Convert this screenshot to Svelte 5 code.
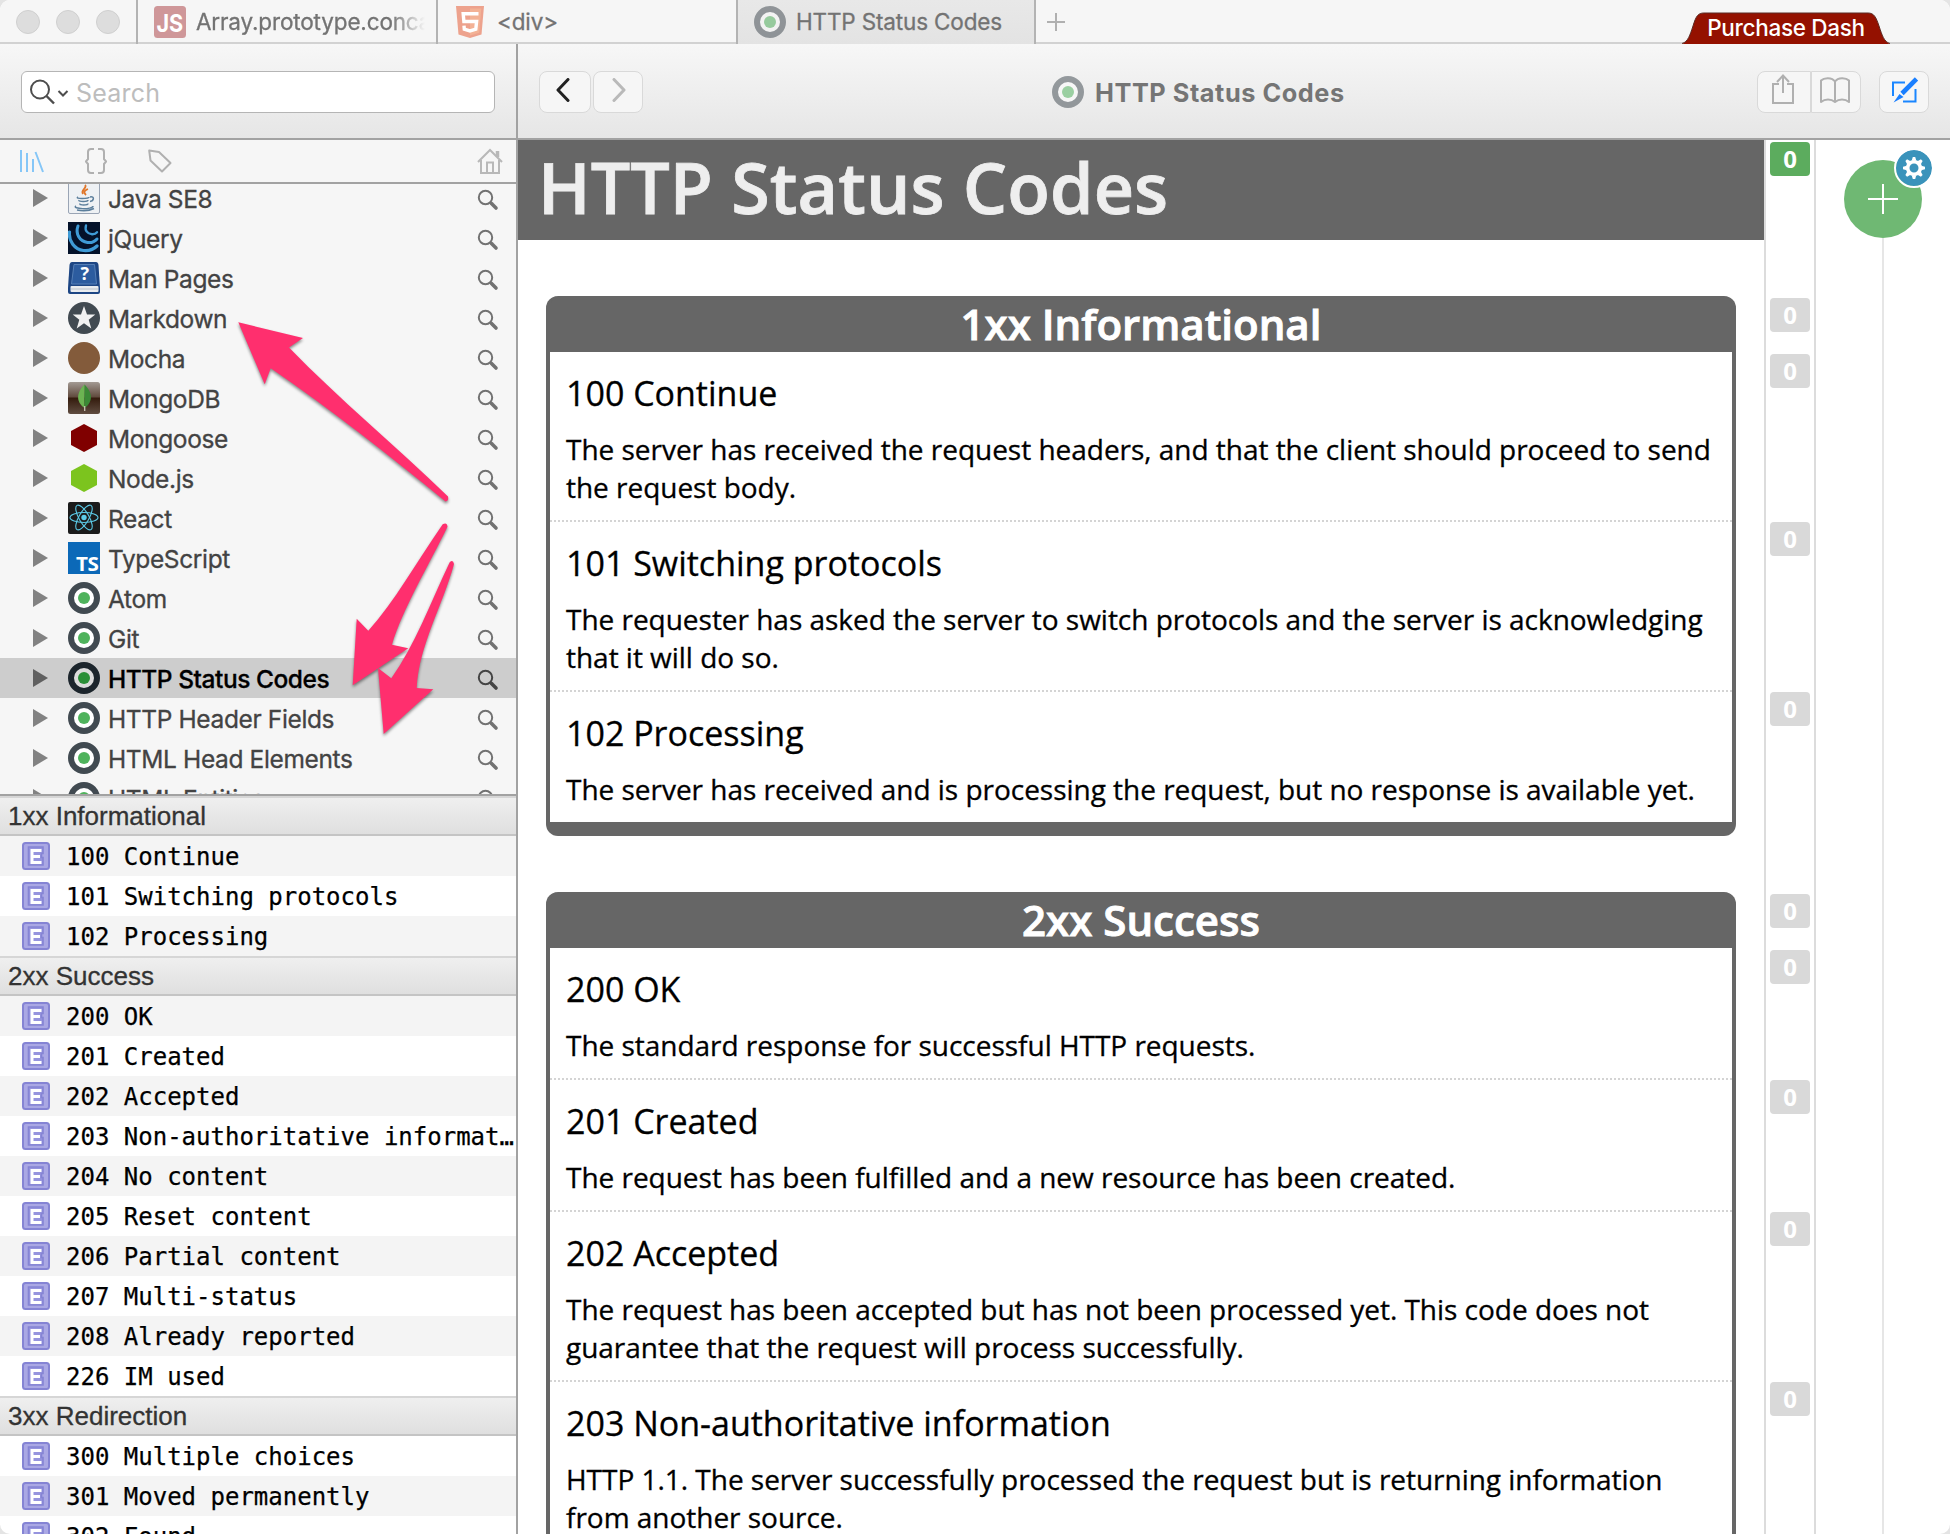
<script>
  const docsets = [
    { name: 'Java SE8', icon: 'java' },
    { name: 'jQuery', icon: 'jquery' },
    { name: 'Man Pages', icon: 'man' },
    { name: 'Markdown', icon: 'markdown' },
    { name: 'Mocha', icon: 'mocha' },
    { name: 'MongoDB', icon: 'mongo' },
    { name: 'Mongoose', icon: 'mongoose' },
    { name: 'Node.js', icon: 'node' },
    { name: 'React', icon: 'react' },
    { name: 'TypeScript', icon: 'ts' },
    { name: 'Atom', icon: 'ring' },
    { name: 'Git', icon: 'ring' },
    { name: 'HTTP Status Codes', icon: 'ring', selected: true },
    { name: 'HTTP Header Fields', icon: 'ring' },
    { name: 'HTML Head Elements', icon: 'ring' },
    { name: 'HTML Entities', icon: 'ring' }
  ];

  const index = [
    { head: '1xx Informational' },
    { text: '100 Continue' },
    { text: '101 Switching protocols' },
    { text: '102 Processing' },
    { head: '2xx Success' },
    { text: '200 OK' },
    { text: '201 Created' },
    { text: '202 Accepted' },
    { text: '203 Non-authoritative information' },
    { text: '204 No content' },
    { text: '205 Reset content' },
    { text: '206 Partial content' },
    { text: '207 Multi-status' },
    { text: '208 Already reported' },
    { text: '226 IM used' },
    { head: '3xx Redirection' },
    { text: '300 Multiple choices' },
    { text: '301 Moved permanently' },
    { text: '302 Found' }
  ];

  const sections = [
    {
      title: '1xx Informational',
      items: [
        ['100 Continue', ['The server has received the request headers, and that the client should proceed to send', 'the request body.']],
        ['101 Switching protocols', ['The requester has asked the server to switch protocols and the server is acknowledging', 'that it will do so.']],
        ['102 Processing', ['The server has received and is processing the request, but no response is available yet.']]
      ]
    },
    {
      title: '2xx Success',
      items: [
        ['200 OK', ['The standard response for successful HTTP requests.']],
        ['201 Created', ['The request has been fulfilled and a new resource has been created.']],
        ['202 Accepted', ['The request has been accepted but has not been processed yet. This code does not', 'guarantee that the request will process successfully.']],
        ['203 Non-authoritative information', ['HTTP 1.1. The server successfully processed the request but is returning information', 'from another source.']]
      ]
    }
  ];

  // Distance from each annotation counter to the next one.
  const counters = [156, 56, 168, 170, 202, 56, 130, 132, 170, 152];
</script>

{#snippet ring(cls)}
  <svg class={cls} width="32" height="32" viewBox="0 0 32 32">
    <circle cx="16" cy="16" r="13" fill="#fff" stroke="#414a51" stroke-width="6" />
    <circle cx="16" cy="16" r="6" fill="#4fb35c" />
  </svg>
{/snippet}

{#snippet icon(kind)}
  <svg width="32" height="32" viewBox="0 0 32 32">
    {#if kind === 'java'}
      <rect x="0.5" y="0.5" width="31" height="31" rx="1.5" fill="#eef1f4" stroke="#9aa5b5" />
      <path d="M17 3c3 3-5 5-2 9 M20 7c-5 2-4 4-2 6" fill="none" stroke="#e0762a" stroke-width="1.8" />
      <path d="M10 15c-4 2 11 2 11 0M11 18c-1 2 9 2 9 0M12 21.5c-1 2 8 2 8 0M22 15c5-1 4 4 0 4.500M8 24c-5 3 17 4 17 0M9 28c8 1.500 14 0 17-1.500" fill="none" stroke="#5c7f9c" stroke-width="1.500" />
    {:else if kind === 'jquery'}
      <rect width="32" height="32" fill="#04122a" />
      <g fill="none" stroke="#3f9bd6" stroke-linecap="round">
        <path d="M1.500 10c-1 9 5 17.500 14 18.500c6 .6 10-1 13.500-4.500" stroke-width="3.200" />
        <path d="M10 4c-3 8 2 15.500 9.500 16.500c4 .5 7-.5 9.500-3.500" stroke-width="3" />
        <path d="M18 3.500c-1.500 5 1.500 8.500 6 8.700c2.500 .1 4-.7 5-2" stroke-width="2.400" />
      </g>
    {:else if kind === 'man'}
      <path d="M4 0h24q2 0 2.500 3L32 26v4q0 2-2 2H2q-2 0-2-2v-4L1.500 3Q2 0 4 0z" fill="#1d4684" />
      <path d="M6 2.500h20.500L28.500 22H3.500z" fill="#2c5c9f" stroke="#557fb6" />
      <rect x="2.500" y="24" width="28" height="6" rx="1" fill="#e9ecef" />
      <path d="M3 27h27" stroke="#b8c0ca" />
      <text x="16.500" y="18" text-anchor="middle" class="qm">?</text>
    {:else if kind === 'markdown'}
      <circle cx="16" cy="16" r="16" fill="#414a51" />
      <path d="M16 4l3 8.600h8.300l-6.600 5.200l2.600 8.700L16 21.200l-7.300 5.300l2.600-8.700l-6.600-5.200H13z" fill="#f1f1f1" />
    {:else if kind === 'mocha'}
      <circle cx="16" cy="16" r="16" fill="#835b3b" />
    {:else if kind === 'mongo'}
      <defs>
        <linearGradient id="mg" x1="0" y1="0" x2="0" y2="1">
          <stop offset="0" stop-color="#a39a93" /><stop offset=".47" stop-color="#604a3d" />
          <stop offset=".5" stop-color="#341b0d" /><stop offset="1" stop-color="#5f4c40" />
        </linearGradient>
      </defs>
      <rect width="32" height="32" rx="2.500" fill="url(#mg)" />
      <path d="M16.500 2.500C7 12 9 21 16.500 26z" fill="#6cb452" />
      <path d="M16.500 2.500C26 12 24 21 16.500 26z" fill="#3b8936" />
      <path d="M16.700 24v5" stroke="#c9c4b5" stroke-width="1.300" />
    {:else if kind === 'mongoose'}
      <path d="M16 2l13 7v14l-13 7l-13-7V9z" fill="#800000" />
    {:else if kind === 'node'}
      <path d="M16 2l13 7v14l-13 7l-13-7V9z" fill="#7cc41e" />
    {:else if kind === 'react'}
      <rect width="32" height="32" rx="2" fill="#1b1b1b" />
      <g fill="none" stroke="#5ccbe8" stroke-width="1.100">
        <ellipse cx="16" cy="15.500" rx="14" ry="5" />
        <ellipse cx="16" cy="15.500" rx="14" ry="5" transform="rotate(60 16 15.500)" />
        <ellipse cx="16" cy="15.500" rx="14" ry="5" transform="rotate(120 16 15.500)" />
      </g>
      <circle cx="16" cy="15.500" r="2.700" fill="#5ccbe8" />
    {:else if kind === 'ts'}
      <rect width="32" height="32" fill="#0c69b8" />
      <text x="8" y="29" class="ts" textLength="22.500" lengthAdjust="spacingAndGlyphs">TS</text>
    {/if}
  </svg>
{/snippet}

<div class="window">
  <div class="tabs">
    <div class="lights"><i></i><i></i><i></i></div>
    <div class="tab">
      <svg width="32" height="32" viewBox="0 0 32 32">
        <rect width="32" height="32" rx="3.500" fill="#cf9799" />
        <text x="2.500" y="25.500" class="js" textLength="26.500" lengthAdjust="spacingAndGlyphs">JS</text>
      </svg>
      <span class="fade">Array.prototype.concat</span>
    </div>
    <div class="tab html">
      <svg width="28" height="32" viewBox="0 0 28 32">
        <path d="M0 0h28l-2.500 28.600L14 32L2.500 28.600z" fill="#eda28d" />
        <path d="M14 2.500h11.300l-2.100 24.300L14 29.500z" fill="#f3b295" />
        <path d="M22.500 7.800H7.200l.7 7.700h12.700l-.8 7.700l-5.800 1.700l-5.700-1.700l-.3-3.600" fill="none" stroke="#fff" stroke-width="3.400" />
      </svg>
      <span>&lt;div&gt;</span>
    </div>
    <div class="tab active">
      {@render ring('dim')}
      <span>HTTP Status Codes</span>
    </div>
    <svg class="plus" width="18" height="18" viewBox="0 0 18 18"><path d="M9 0v18M0 9h18" stroke="#b0b0b0" stroke-width="2" /></svg>
    <div class="purchase">
      <svg width="208" height="32" viewBox="0 0 208 32"><path d="M0 32C6 30 8 23 11 14C14 4 16 1 22 1H186C192 1 194 5 197 14C200 23 202 30 208 32z" fill="#941100" /><path d="M0 31.500C6 30 8 23 11 14C14 4 16 1 22 1H186C192 1 194 5 197 14C200 23 202 30 208 31.500" fill="none" stroke="#5a2a24" /></svg>
      <span>Purchase Dash</span>
    </div>
  </div>

  <div class="toolbar">
    <div class="searchbox">
      <div class="search">
        <svg width="42" height="30" viewBox="0 0 42 30">
          <circle cx="13" cy="12.500" r="9" fill="none" stroke="#4d4d4d" stroke-width="2" />
          <path d="M19.500 19l7.500 7.500" stroke="#4d4d4d" stroke-width="2.400" />
          <path d="M31.500 14l4.500 4.500l4.500-4.500" fill="none" stroke="#4d4d4d" stroke-width="2" />
        </svg>
        <span>Search</span>
      </div>
    </div>
    <div class="nav">
      <div class="btn back"><svg width="14" height="24" viewBox="0 0 14 24"><path d="M12 1.500L2 12l10 10.500" fill="none" stroke="#222" stroke-width="3" stroke-linecap="round" stroke-linejoin="round" /></svg></div>
      <div class="btn fwd"><svg width="14" height="24" viewBox="0 0 14 24"><path d="M2 1.500L12 12L2 22.500" fill="none" stroke="#b9b9b9" stroke-width="3" stroke-linecap="round" stroke-linejoin="round" /></svg></div>
    </div>
    <div class="title">
      {@render ring('dim')}
      <span>HTTP Status Codes</span>
    </div>
    <div class="actions">
      <div class="btn share">
        <svg width="22" height="30" viewBox="0 0 22 30"><path d="M7 10H1v19h20V10h-6M11 19V2M5 8l6-6.500L17 8" fill="none" stroke="#b0b0b0" stroke-width="2" /></svg>
      </div>
      <div class="btn book">
        <svg width="30" height="26" viewBox="0 0 30 26"><path d="M15 4.500C12 0 4 .5 1 3.500V25c4-3.500 10-3.500 14 0c4-3.500 10-3.500 14 0V3.500C26 .5 18 0 15 4.500V24" fill="none" stroke="#b0b0b0" stroke-width="2" stroke-linejoin="round" /></svg>
      </div>
      <div class="btn edit">
        <svg width="26" height="26" viewBox="0 0 26 26"><path d="M13 5.500H1V19M23.500 12v12.500H11" fill="none" stroke="#1a86ff" stroke-width="2" /><path d="M24.500 2L10 16.500" stroke="#1a7fff" stroke-width="4.600" /><path d="M7.500 17l4 3L1.500 25.500z" fill="#1a7fff" /></svg>
      </div>
    </div>
  </div>

  <div class="body">
    <div class="sidebar">
      <div class="modes">
        <svg width="24" height="24" viewBox="0 0 24 24"><path d="M1 1v22M7 4v19M13 10v13M15.500 3L23 23" stroke="#85c6f7" stroke-width="2" /></svg>
        <svg class="braces" width="22" height="26" viewBox="0 0 22 26"><path d="M9 1H6Q3 1 3 4v7L.8 13.500L3 16v6q0 3 3 3h3M13 1h3q3 0 3 3v7l2.200 2.500L19 16v6q0 3-3 3h-3" fill="none" stroke="#b0b0b0" stroke-width="2" /></svg>
        <svg class="tag" width="24" height="24" viewBox="0 0 24 24"><path d="M1.200 1.500L11 3L22.500 14L14 22.500L2.500 11.500z" fill="none" stroke="#b0b0b0" stroke-width="2" stroke-linejoin="round" /></svg>
        <svg class="home" width="26" height="26" viewBox="0 0 26 26"><path d="M1 14L13 2l12 12M4 12v13h18V12M10 25V14.500h6V25" fill="none" stroke="#b8b8b8" stroke-width="2" /><path d="M20.500 3v6" stroke="#b8b8b8" stroke-width="3.500" /></svg>
      </div>
      <div class="docsets">
        {#each docsets as d}
          <div class="docset" class:selected={d.selected}>
            <svg class="tri" width="15" height="18" viewBox="0 0 15 18"><path d="M0 0l15 9L0 18z" /></svg>
            <div class="ico">{#if d.icon === 'ring'}{@render ring(d.selected ? 'dark' : '')}{:else}{@render icon(d.icon)}{/if}</div>
            <span>{d.name}</span>
            <svg class="mag" width="22" height="22" viewBox="0 0 22 22"><circle cx="8.500" cy="8.500" r="6.700" /><path d="M13 13l2 2" /><path class="handle" d="M14.500 14.500l4.500 4.500" /></svg>
          </div>
        {/each}
      </div>
      <div class="index">
        {#each index as row, i}
          {#if row.head}
            <div class="head">{row.head}</div>
          {:else}
            <div class="entry" class:odd={i % 2 === 1}>
              <svg width="28" height="28" viewBox="0 0 28 28">
                <rect x="1" y="1" width="26" height="26" rx="2.500" fill="#aaa8e4" stroke="#8584d4" stroke-width="2" />
                <path d="M6.500 5H21v6.500h-1.500v4H21V23H6.500z" fill="#9694de" stroke="#8584d4" stroke-width="1.600" />
                <path d="M19.500 8.500H10v12h9.500M10 14.500h8" fill="none" stroke="#fff" stroke-width="3" />
              </svg>
              <span>{row.text}</span>
            </div>
          {/if}
        {/each}
      </div>
    </div>

    <div class="page">
      <h1>HTTP Status Codes</h1>
      {#each sections as s}
        <section>
          <h2>{s.title}</h2>
          {#each s.items as [title, lines]}
            <article>
              <h3>{title}</h3>
              {#each lines as line}<p>{line}</p>{/each}
            </article>
          {/each}
        </section>
      {/each}
    </div>

    <div class="counters">
      {#each counters as h, i}
        <div class="slot" style="height: {h}px"><b class:green={i === 0}>0</b></div>
      {/each}
    </div>

    <div class="notes">
      <div class="add">
        <svg width="30" height="30" viewBox="0 0 30 30"><path d="M15 0v30M0 15h30" stroke="#fff" stroke-width="2" /></svg>
        <div class="gear">
          <svg width="22" height="22" viewBox="-11 -11 22 22">
            <circle r="6.300" fill="none" stroke="#fff" stroke-width="3.600" />
            {#each [0, 45, 90, 135, 180, 225, 270, 315] as a}
              <path d="M-2.300-7.200L-1.200-11H1.200L2.300-7.200z" fill="#fff" transform="rotate({a})" />
            {/each}
          </svg>
        </div>
      </div>
      <div class="line"></div>
    </div>
  </div>

  <svg class="arrows" width="518" height="800" viewBox="0 0 518 800">
    <g fill="#ff2f6e">
      <path d="M238.300 322.300L303 338L289 347.500C340 400 396 446 448 496.500Q449 501 445.500 501.500C390 456 330 409 270.700 368.300L264.700 384.300z" />
      <path d="M352.700 685.300L356.700 618.700L368.300 630.700C395 601 416 563 442.700 524.300Q447 522 447.500 526.700C430 563 402 610 392 644.700L408.300 648.300z" />
      <path d="M383.700 734L378 668L391.300 678.300C415 645 430 604 449.700 562.300Q453 559 454 564C443 605 419 645 416.700 688L433.300 689.300z" />
    </g>
  </svg>
</div>

<style>
  :global(body) { margin: 0; background: #e4e4e4; }
  .window {
    position: relative;
    width: 1950px;
    height: 1534px;
    overflow: hidden;
    display: flex;
    flex-direction: column;
    background: #fff;
    border-radius: 10px;
    font-family: Inter, Roboto, sans-serif;
  }
  svg { display: block; flex: none; }
  .window * { box-sizing: border-box; }

  .tabs { display: flex; height: 44px; flex: none; background: #f6f6f6; border-bottom: 2px solid #d2d2d2; }
  .lights { width: 136px; display: flex; gap: 16px; padding: 10px 0 0 16px; }
  .lights i { width: 24px; height: 24px; border-radius: 50%; background: #ddd; border: 1px solid #cfcfcf; }
  .tab {
    width: 300px; height: 44px; display: flex; gap: 10px; padding: 6px 0 0 16px;
    border-left: 2px solid #b3b3b3; color: #737373; font-size: 22.500px; line-height: 32px; white-space: nowrap;
    letter-spacing: -.15px; -webkit-text-stroke: .3px #737373;
  }
  .tab.html { padding-left: 18px; gap: 13px; }
  .tab.active { width: 300px; border-right: 2px solid #b3b3b3; background: linear-gradient(#e8e8e8, #e3e3e3); padding-left: 16px; gap: 10px; }
  .fade { width: 229px; overflow: hidden; -webkit-mask-image: linear-gradient(90deg, #000 195px, transparent 229px); mask-image: linear-gradient(90deg, #000 195px, transparent 229px); }
  .dim { opacity: .52; }
  .plus { margin: 13px 0 0 11px; }
  .purchase { position: relative; margin: 12px 60px 0 auto; height: 32px; width: 208px; }
  .purchase span { position: absolute; inset: 0; text-align: center; color: #fff; font-size: 22.500px; line-height: 32px; font-weight: 500; letter-spacing: -.3px; }

  .toolbar { display: flex; height: 96px; flex: none; background: linear-gradient(#f7f7f7, #e6e6e6); border-bottom: 2px solid #a2a2a2; }
  .searchbox { width: 518px; border-right: 2px solid #a2a2a2; padding: 27px 21px 0; }
  .search { height: 42px; border: 1px solid #b5b5b5; border-radius: 6px; background: #fff; display: flex; padding: 5px 0 0 5px; color: #bdbdbd; font-size: 25px; line-height: 32px; letter-spacing: .2px; gap: 7px; }
  .btn { height: 42px; border: 1px solid #d9d9d9; border-radius: 8px; background: #f6f6f6; display: flex; justify-content: center; padding-top: 6px; }
  .nav { display: flex; gap: 2px; padding: 27px 0 0 21px; width: 534px; }
  .back { width: 52px; padding-right: 5px; }
  .fwd { width: 50px; padding-left: 2px; }
  .title { display: flex; gap: 11px; padding-top: 32px; color: #757575; font-size: 25.300px; font-weight: 700; line-height: 34px; letter-spacing: .55px; white-space: nowrap; }
  .actions { margin-left: auto; display: flex; padding: 27px 21px 0 0; }
  .share { width: 54px; border-radius: 8px 0 0 8px; padding-top: 2px; padding-right: 2px; }
  .book { width: 50px; border-radius: 0 8px 8px 0; border-left-width: 1px; padding-top: 5px; padding-right: 3px; }
  .edit { width: 50px; margin-left: 18px; padding-top: 5px; padding-left: 1px; }

  .body { flex: 1; min-height: 0; display: flex; }
  .sidebar { width: 518px; flex: none; border-right: 2px solid #a2a2a2; display: flex; flex-direction: column; overflow: hidden; }
  .modes { height: 44px; flex: none; background: #f6f6f6; border-bottom: 2px solid #a2a2a2; display: flex; padding: 9px 13px 0 20px; }
  .braces { margin: -1px 0 0 41px; }
  .tag { margin-left: 41px; }
  .home { margin: -1px 0 0 auto; }
  .docsets { height: 612px; flex: none; overflow: hidden; background: #f6f6f6; border-bottom: 2px solid #a2a2a2; display: flex; flex-direction: column; justify-content: flex-start; }
  .docset { height: 40px; flex: none; display: flex; padding: 4px 17px 0 33px; color: #434343; font-size: 24.500px; line-height: 34px; letter-spacing: -.37px; white-space: nowrap; -webkit-text-stroke: .3px #434343; }
  .docset:first-child { margin-top: -6px; }
  .docset.selected { background: #cdcdcd; color: #000; font-weight: 500; letter-spacing: -.46px; -webkit-text-stroke-color: #000; }
  .tri { margin: 7px 20px 0 0; fill: #828282; }
  .selected .tri { fill: #606060; }
  .ico { margin-right: 8px; }
  .dark { filter: brightness(.78) contrast(1.3); }
  .mag { margin: 7px 0 0 auto; fill: none; stroke: #727272; stroke-width: 2; }
  .mag .handle { stroke-width: 3.600; stroke-linecap: round; }
  .selected .mag { stroke: #444; }
  .qm { font: 700 18px "Open Sans", sans-serif; fill: #fff; }
  .ts { font: 700 20px "Open Sans", sans-serif; fill: #fff; }
  .js { font: 700 24px Inter, sans-serif; fill: #fff; }

  .head { height: 40px; padding-left: 8px; border-top: 2px solid #d6d6d6; border-bottom: 2px solid #c4c4c4; background: linear-gradient(#efefef, #dfdfdf); color: #333; font: 26px/37px "Liberation Sans", Arial, sans-serif; -webkit-text-stroke: .3px #333; white-space: nowrap; }
  .entry { height: 40px; display: flex; gap: 16px; padding: 6px 0 0 22px; color: #000; font: 24px/31px "DejaVu Sans Mono", monospace; white-space: nowrap; -webkit-text-stroke: .25px #000; }
  .entry.odd { background: #f4f4f4; }
  .entry span { flex: 1; min-width: 0; overflow: hidden; text-overflow: ellipsis; }

  .page { width: 1246px; flex: none; height: 1394px; overflow: hidden; font-family: "Open Sans", sans-serif; color: #000; }
  h1, h2, h3, p { margin: 0; white-space: nowrap; }
  h1 { height: 100px; padding-left: 20px; background: #666; color: #eee; font-size: 70px; font-weight: 600; line-height: 94px; letter-spacing: .06px; -webkit-text-stroke: .8px #eee; }
  section { margin: 56px 28px 0; border: 4px solid #666; border-top: 0; border-bottom-width: 14px; border-radius: 12px; background: #666; }
  h2 { height: 56px; color: #fff; text-align: center; font-size: 42px; font-weight: 600; line-height: 56px; -webkit-text-stroke: .9px #fff; }
  article { padding: 16px 16px 14px; background: #fff; }
  article + article { border-top: 2px dotted #d4d4d4; background-clip: border-box; }
  h3 { height: 62px; font-size: 34px; font-weight: 400; line-height: 50px; -webkit-text-stroke: .3px #000; }
  p { font-size: 28px; line-height: 38px; letter-spacing: -.025px; -webkit-text-stroke: .3px #000; }

  .counters { width: 52px; flex: none; height: 1394px; overflow: hidden; border: solid #dcdcdc; border-width: 0 2px; padding: 2px 4px 0; }
  .slot b { display: block; width: 40px; height: 34px; border-radius: 4px; background: #d9d9d9; color: #fff; text-align: center; font: 700 24px/34px "Open Sans", sans-serif; }
  .slot b.green { background: #5cac5e; }
  .notes { flex: 1; display: flex; flex-direction: column; padding: 20px 0 0 28px; }
  .add { position: relative; width: 78px; height: 78px; flex: none; border-radius: 50%; background: #6fb873; padding: 24px; }
  .gear { position: absolute; left: 50px; top: -12px; width: 40px; height: 40px; border-radius: 50%; border: 2px solid #fff; background: #3a93bb; padding: 7px; background-clip: padding-box; }
  .line { width: 2px; flex: 1; margin-left: 38px; background: #e6e6e6; }

  .arrows { position: absolute; left: 0; top: 0; filter: drop-shadow(0 2px 1.500px rgba(0, 0, 0, .45)); }
</style>
